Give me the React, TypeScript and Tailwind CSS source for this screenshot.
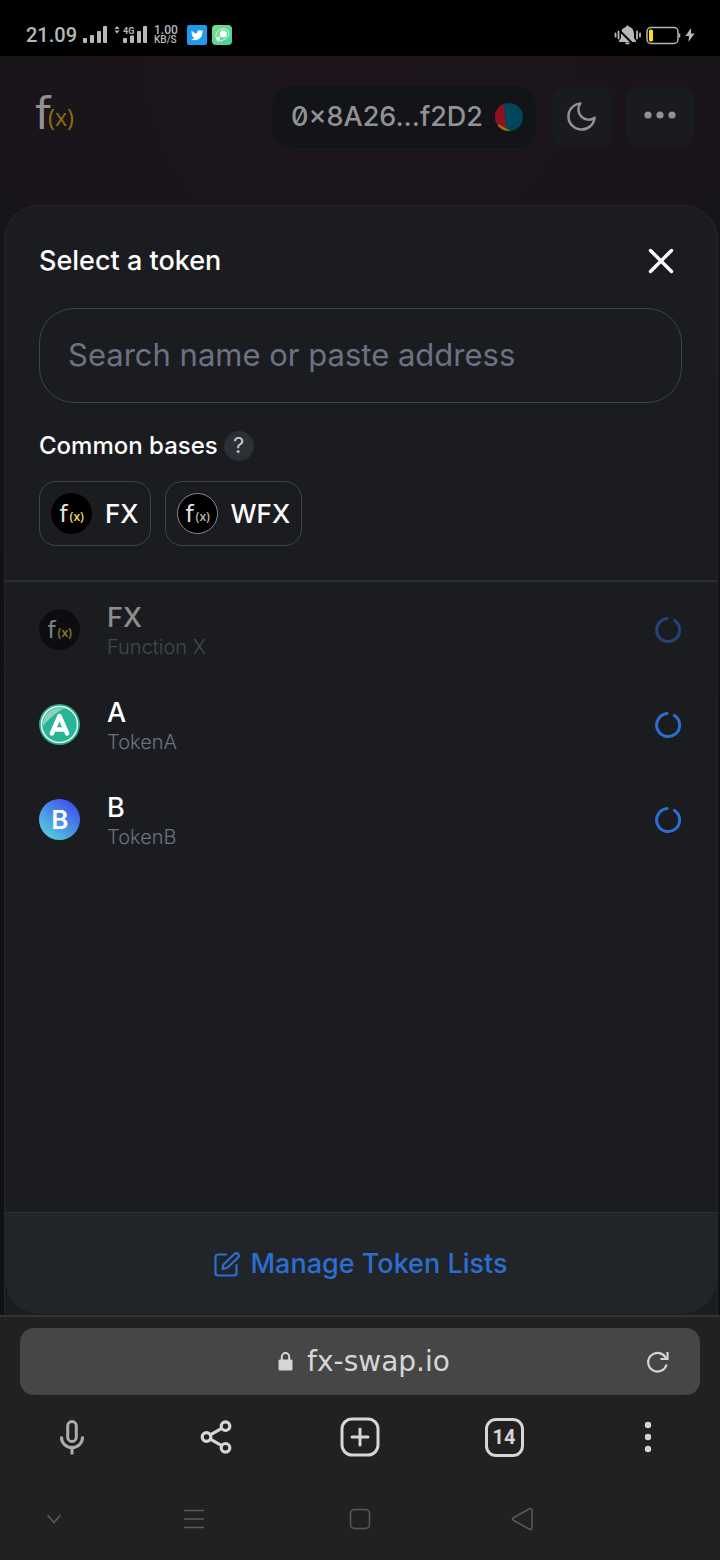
import { ReactNode } from "react";
import clsx from "clsx";

type Token = {
    symbol: string;
    name: string;
    icon: ReactNode;
    disabled?: boolean;
};

const FxLogo = ({ accent, ring }: { accent: string; ring?: boolean }) => (
    <svg viewBox="0 0 41 41" className="size-[41px] shrink-0" aria-hidden="true">
        <circle cx="20.5" cy="20.5" r="20" fill="#000" stroke={ring ? "#8a8a8a" : "#000"} strokeWidth="1" />
        <text x="8.5" y="29" fill="#e4e4e4" fontSize="23" fontFamily="DejaVu Sans, sans-serif">f</text>
        <text x="18.500" y="28" fill={accent} fontSize="12" fontWeight="600" fontFamily="Noto Sans, sans-serif">(x)</text>
    </svg>
);

const TokenAIcon = () => (
    <svg viewBox="0 0 41 41" className="size-[41px] shrink-0" aria-hidden="true">
        <circle cx="20.5" cy="20.5" r="20.5" fill="#2aa88c" />
        <circle cx="20.5" cy="20.5" r="18" fill="#27b596" stroke="#e9faf5" strokeWidth="1.5" />
        <path d="M4 22 A16.5 16.5 0 0 1 25 4.6 Q15 9 4 22Z" fill="#8fd0c0" />
        <path d="M12.8 29.5 L20.5 12 L28.2 29.5 M15.5 25.5 H25.5" fill="none" stroke="#fff" strokeWidth="4.4" strokeLinecap="round" strokeLinejoin="round" />
    </svg>
);

const TokenBIcon = () => (
    <svg viewBox="0 0 41 41" className="size-[41px] shrink-0" aria-hidden="true">
        <defs>
            <linearGradient id="token-b" x1="0.15" y1="0.9" x2="0.8" y2="0.1">
                <stop offset="0" stopColor="#55cbdc" />
                <stop offset="1" stopColor="#3e55ea" />
            </linearGradient>
        </defs>
        <circle cx="20.5" cy="20.5" r="20.5" fill="url(#token-b)" />
        <text x="20.8" y="30" textAnchor="middle" fill="#fff" fontSize="26" fontWeight="600" fontFamily="Inter, sans-serif">B</text>
    </svg>
);

const tokens: Token[] = [
    { symbol: "FX", name: "Function X", icon: <FxLogo accent="#e6cf50" />, disabled: true },
    { symbol: "A", name: "TokenA", icon: <TokenAIcon /> },
    { symbol: "B", name: "TokenB", icon: <TokenBIcon /> },
];

const Spinner = () => (
    <svg viewBox="0 0 28 28" className="size-7" aria-label="Loading" role="img">
        <path d="M20.4 4.4 A11.5 11.5 0 1 1 13 2.6" fill="none" stroke="#2b6fd0" strokeWidth="3" strokeLinecap="round" />
    </svg>
);

const StatusBar = () => (
    <div className="flex h-14 items-start justify-between bg-black pt-[22px] pr-[25px] pl-[26px] text-[#b8b8b8]" style={{ fontFamily: "Roboto, sans-serif" }}>
        <div className="flex h-[26px] items-center">
            <span className="text-xl leading-[26px] font-medium">21.09</span>
            <svg viewBox="0 0 66 20" className="ml-1.5 h-5 w-[66px]" fill="currentColor" aria-hidden="true">
                <rect x="0" y="13" width="4" height="5" rx="1" />
                <rect x="7" y="10" width="4" height="8" rx="1" />
                <rect x="14" y="6" width="4" height="12" rx="1" />
                <rect x="20" y="1" width="4" height="17" rx="1" />
                <path d="M31.500 4 L34 1 L36.500 4Z M31.500 5.500 L34 8.500 L36.500 5.500Z" />
                <text x="40" y="8.500" fontSize="9" fontWeight="700" fontFamily="Roboto, sans-serif">4G</text>
                <rect x="40" y="13" width="4" height="5" rx="1" />
                <rect x="47" y="10.500" width="4" height="7.500" rx="1" />
                <rect x="54" y="6" width="4" height="12" rx="1" />
                <rect x="60" y="1" width="4" height="17" rx="1" />
            </svg>
            <div className="ml-[5px] flex w-[26px] flex-col font-medium">
                <span className="text-xs leading-[10px]">1.00</span>
                <span className="text-[10px] leading-[10px]">KB/S</span>
            </div>
            <svg viewBox="0 0 20 20" className="ml-[7px] size-5" aria-hidden="true">
                <rect width="20" height="20" rx="2" fill="#1d9bf0" />
                <path transform="translate(4 4) scale(.52)" fill="#fff" d="M23.950 4.570a10 10 0 0 1-2.820.770 4.960 4.960 0 0 0 2.160-2.720c-.950.550-2 .960-3.130 1.180a4.920 4.920 0 0 0-8.380 4.480C7.690 8.100 4.070 6.130 1.640 3.160a4.820 4.820 0 0 0-.670 2.480c0 1.710.870 3.210 2.190 4.100a4.900 4.900 0 0 1-2.230-.620v.060a4.920 4.920 0 0 0 3.950 4.830 5 5 0 0 1-2.210.080 4.940 4.940 0 0 0 4.600 3.420A9.870 9.870 0 0 1 0 19.540a14 14 0 0 0 7.550 2.210c9.050 0 14-7.500 14-13.980 0-.210 0-.420-.020-.630a9.940 9.940 0 0 0 2.420-2.570z" />
            </svg>
            <svg viewBox="0 0 20 20" className="ml-[5px] size-5" aria-hidden="true">
                <defs>
                    <linearGradient id="app-green" x1="0" y1="0" x2="1" y2="1">
                        <stop offset="0" stopColor="#7fdc86" />
                        <stop offset="1" stopColor="#41d3a4" />
                    </linearGradient>
                </defs>
                <rect width="20" height="20" rx="4" fill="url(#app-green)" />
                <circle cx="11.200" cy="9" r="3.600" fill="#fff" />
                <circle cx="6" cy="13.500" r="2" fill="#fff" />
                <path d="M4 12 C3 7 8 3.500 12 3.800 C17 4.500 17.500 9 15.500 12 C13 15 8 16.500 5 16" fill="none" stroke="#e8fff0" strokeWidth=".9" />
            </svg>
        </div>
        <div className="flex h-[26px] items-center">
            <svg viewBox="0 0 28 22" className="h-[22px] w-7" fill="currentColor" aria-hidden="true">
                <path d="M13.500 1.500 a1.500 1.500 0 0 1 1.500 1.300 C19 4 20 7 20 11 L20 14 L22 17 V18 H5 V17 L7 14 V11 C7 7 8 4 12 3.300 A1.500 1.500 0 0 1 13.500 1.500Z M11 18.500 H16 A2.500 2 0 0 1 11 18.500Z" />
                <path d="M3 4 L20 21" stroke="#000" strokeWidth="2" />
                <path d="M1.500 9.500 V12.500 M4.500 7.500 V14.500 M23 7.500 V14.500 M26 9.500 V12.500" stroke="currentColor" strokeWidth="1.800" strokeLinecap="round" />
            </svg>
            <svg viewBox="0 0 35 19" className="ml-1 h-[19px] w-[35px]" aria-hidden="true">
                <rect x="1" y="1.500" width="31" height="16" rx="4" fill="none" stroke="currentColor" strokeWidth="1.500" />
                <path d="M33.500 7.500 V11.500" stroke="currentColor" strokeWidth="1.500" />
                <rect x="3" y="3.500" width="4" height="12" rx="1.500" fill="#ffdf1b" />
            </svg>
            <svg viewBox="0 0 10 14" className="ml-1 h-3.5 w-2.5" fill="currentColor" aria-hidden="true">
                <path d="M6 0 L0.500 8 H4 L3.500 14 L9.500 5.500 H6Z" />
            </svg>
        </div>
    </div>
);

const SiteHeader = () => (
    <header className="flex items-start justify-between pt-7 pr-[26px] pb-[55px] pl-[34px]">
        <svg viewBox="0 0 46 64" className="h-16 w-[46px]" role="img" aria-label="f(x)">
            <text x="1" y="45" fill="#929094" fontSize="44" fontFamily="DejaVu Sans, sans-serif">f</text>
            <text x="14" y="42" fill="#8d6b10" fontSize="23" fontFamily="Noto Sans, sans-serif">(x)</text>
        </svg>
        <div className="flex items-center">
            <button type="button" className="flex h-[66px] items-center gap-3 rounded-[24px] border border-[#1b1c20] bg-[#121418] pr-3.5 pl-5 text-[27px] font-medium text-[#929294]">
                <span style={{ fontFeatureSettings: '"zero", "calt"' }}>0×8A26...f2D2</span>
                <svg viewBox="0 0 28 28" className="size-7" aria-hidden="true">
                    <defs>
                        <clipPath id="avatar"><circle cx="14" cy="14" r="14" /></clipPath>
                    </defs>
                    <g clipPath="url(#avatar)">
                        <rect width="28" height="28" fill="#02465b" />
                        <path d="M0 0 L9 2 L11 28 H0Z" fill="#930f22" />
                        <path d="M3 21 L16 28 H3Z" fill="#a0700d" />
                    </g>
                </svg>
            </button>
            <button type="button" aria-label="Toggle theme" className="ml-[13px] flex h-[60px] w-[61px] items-center justify-center rounded-[14px] bg-[#191b1f] pb-0.5 text-[#929294]">
                <svg viewBox="0 0 24 24" className="size-[35px]" fill="none" stroke="currentColor" strokeWidth="1.700" strokeLinecap="round" strokeLinejoin="round">
                    <path d="M21 12.790A9 9 0 1 1 11.210 3 7 7 0 0 0 21 12.790z" />
                </svg>
            </button>
            <button type="button" aria-label="More" className="ml-3.5 flex h-[60px] w-[68px] items-center justify-center rounded-[14px] bg-[#191b1f] pb-1 text-[#929294]">
                <svg viewBox="0 0 32 8" className="h-2 w-8" fill="currentColor">
                    <circle cx="4" cy="4" r="3.600" />
                    <circle cx="16" cy="4" r="3.600" />
                    <circle cx="28" cy="4" r="3.600" />
                </svg>
            </button>
        </div>
    </header>
);

const TokenRow = ({ token }: { token: Token }) => (
    <li>
        <button
            type="button"
            disabled={token.disabled}
            className={clsx("flex h-[95px] w-full items-center pr-[35px] pl-[34px] text-left", token.disabled && "opacity-50")}
        >
            {token.icon}
            <span className="ml-[27px] flex flex-1 flex-col">
                <span className="text-[27px] leading-[35px] font-medium text-white">{token.symbol}</span>
                <span className="text-xl leading-[24px] font-light text-[#6c7284]">{token.name}</span>
            </span>
            <Spinner />
        </button>
    </li>
);

const TokenModal = () => (
    <section className="mr-0.5 ml-1 flex flex-1 flex-col rounded-t-[35px] border border-b-0 border-[#25262b] bg-[#1b1c20]">
        <div className="border-b-2 border-[#2c2e36] pt-[34px] pr-[35px] pb-[34px] pl-[34px]">
            <div className="flex h-[42px] items-center justify-between">
                <h2 className="text-[27px] font-medium text-white">Select a token</h2>
                <button type="button" aria-label="Close" className="flex size-[42px] items-center justify-center text-white">
                    <svg viewBox="0 0 26 26" className="size-[26px]" fill="none" stroke="currentColor" strokeWidth="3.400" strokeLinecap="round">
                        <path d="M2.500 2.500 L23.500 23.500 M23.500 2.500 L2.500 23.500" />
                    </svg>
                </button>
            </div>
            <input
                type="text"
                aria-label="Search name or paste address"
                placeholder="Search name or paste address"
                className="mt-[26px] block h-[95px] w-full rounded-[35px] border border-[#40444f] bg-transparent px-7 pb-0.5 text-[31px] text-white outline-none placeholder:text-[#6c7284]"
            />
            <div className="mt-[27px] flex h-[31px] items-center gap-1.5">
                <span className="text-2xl font-medium text-white">Common bases</span>
                <button type="button" aria-label="Help" className="flex size-[30px] items-center justify-center rounded-full bg-[#2c2f36] text-[22px] text-[#c3c5cb]">?</button>
            </div>
            <div className="mt-5 flex gap-3.5">
                <button type="button" className="flex h-[65px] items-center gap-[13px] rounded-[17px] border border-[#40444f] px-[11px] text-[26px] font-medium text-white">
                    <FxLogo accent="#e6cf50" />
                    FX
                </button>
                <button type="button" className="flex h-[65px] items-center gap-[13px] rounded-[17px] border border-[#40444f] px-[11px] text-[26px] font-medium text-white">
                    <FxLogo accent="#b5b09c" ring />
                    WFX
                </button>
            </div>
        </div>
        <ul className="flex-1">
            {tokens.map((token) => (
                <TokenRow key={token.symbol} token={token} />
            ))}
        </ul>
        <div className="mb-px flex h-[102px] items-center justify-center rounded-b-[35px] border-t border-[#2c3035] bg-[#212429] pt-0.5">
            <button type="button" className="flex items-center gap-2.5 text-[27px] font-medium text-[#2b6fd0]">
                <svg viewBox="0 1 26 26" className="size-[26px]" fill="none" stroke="currentColor" strokeWidth="2.200" strokeLinecap="round" strokeLinejoin="round" aria-hidden="true">
                    <path d="M12 3.500 H4 A2.500 2.500 0 0 0 1.500 6 V22 A2.500 2.500 0 0 0 4 24.500 H20 A2.500 2.500 0 0 0 22.500 22 V14" />
                    <path d="M20.500 3 A2.400 2.400 0 0 1 24.200 6.500 L13 17 L8.500 18 L9.500 13.500 Z" />
                </svg>
                Manage Token Lists
            </button>
        </div>
    </section>
);

const BrowserBar = () => (
    <footer className="border-t-2 border-[#333333] bg-[#212121] pt-[11px] pb-px text-[#d6d6d6]">
        <div className="mx-5 grid h-[67px] grid-cols-[1fr_auto_1fr] items-center rounded-[14px] bg-[#464646]">
            <span />
            <a href="#url" className="flex items-center gap-3.5 pl-2 text-[28px]" style={{ fontFamily: '"DejaVu Sans", sans-serif' }}>
                <svg viewBox="0 0 15 19" className="h-[19px] w-[15px]" fill="currentColor" aria-hidden="true">
                    <rect x="0.500" y="7.500" width="14" height="11" rx="1.500" />
                    <path d="M3.800 8 V4.700 A3.700 3.700 0 0 1 11.200 4.700 V8" fill="none" stroke="currentColor" strokeWidth="2" />
                </svg>
                fx-swap.io
            </a>
            <button type="button" aria-label="Reload" className="mr-[30px] justify-self-end">
                <svg viewBox="0 0 24 24" className="size-6" fill="none" stroke="currentColor" strokeWidth="2.200">
                    <path d="M20.500 14.500 A9.300 9.300 0 1 1 20 8.500" />
                    <path d="M21.500 2 V9 H14.500" />
                </svg>
            </button>
        </div>
        <div className="grid h-[84px] grid-cols-5 place-items-center">
            <button type="button" aria-label="Voice search" className="text-[#adadad]">
                <svg viewBox="0 0 26 36" className="h-9 w-[26px]" fill="none" stroke="currentColor" strokeWidth="3">
                    <rect x="8.700" y="2.500" width="8.600" height="20" rx="4.300" />
                    <path d="M2.500 17.500 V18.500 A10.500 10 0 0 0 23.500 18.500 V17.500 M13 28.500 V35.500" />
                </svg>
            </button>
            <button type="button" aria-label="Share">
                <svg viewBox="0 0 32 36" className="h-9 w-8" fill="none" stroke="currentColor" strokeWidth="3.200">
                    <circle cx="6.500" cy="18" r="4.300" />
                    <circle cx="25.500" cy="7.200" r="4.300" />
                    <circle cx="25.500" cy="28.800" r="4.300" />
                    <path d="M10.300 15.800 L21.700 9.400 M10.300 20.200 L21.700 26.600" />
                </svg>
            </button>
            <button type="button" aria-label="New tab">
                <svg viewBox="0 0 40 40" className="size-10" fill="none" stroke="currentColor" strokeWidth="3">
                    <rect x="2" y="2" width="36" height="36" rx="10" />
                    <path d="M20 12 V28 M12 20 H28" strokeLinecap="round" />
                </svg>
            </button>
            <button
                type="button"
                aria-label="Tabs"
                className="flex size-[39px] items-center justify-center rounded-[11px] border-3 border-[#d6d6d6] text-xl leading-none font-bold"
                style={{ fontFamily: "Roboto, sans-serif" }}
            >
                14
            </button>
            <button type="button" aria-label="Menu">
                <svg viewBox="0 0 8 32" className="h-8 w-2" fill="currentColor">
                    <circle cx="4" cy="4" r="3.200" />
                    <circle cx="4" cy="16" r="3.200" />
                    <circle cx="4" cy="28" r="3.200" />
                </svg>
            </button>
        </div>
        <nav className="grid h-20 grid-cols-[15fr_24fr_22fr_23fr_16fr] place-items-center text-[#5a5a5a]">
            <button type="button" aria-label="Hide navigation">
                <svg viewBox="0 0 16 10" className="h-2.5 w-4" fill="none" stroke="currentColor" strokeWidth="1.500">
                    <path d="M1.500 1 L8 8.500 L14.500 1" />
                </svg>
            </button>
            <button type="button" aria-label="Recent apps">
                <svg viewBox="0 0 22 22" className="size-[22px]" stroke="currentColor" strokeWidth="1.500">
                    <path d="M1 2.500 H21 M1 11 H21 M1 19.500 H21" />
                </svg>
            </button>
            <button type="button" aria-label="Home">
                <svg viewBox="0 0 22 22" className="size-[22px]" fill="none" stroke="currentColor" strokeWidth="1.500">
                    <rect x="1.500" y="1.500" width="19" height="19" rx="4" />
                </svg>
            </button>
            <button type="button" aria-label="Back">
                <svg viewBox="0 0 24 24" className="size-6" fill="none" stroke="currentColor" strokeWidth="1.500" strokeLinejoin="round">
                    <path d="M20 1.500 L3 11 Q1.800 12 3 13 L20 22.500 Q22 22.800 22 21 V3 Q22 1.200 20 1.500Z" />
                </svg>
            </button>
        </nav>
    </footer>
);

const App = () => {
    return (
        <div className="flex min-h-screen flex-col bg-[#0f0f12]" style={{ fontFamily: "Inter, sans-serif" }}>
            <StatusBar />
            <main className="flex flex-1 flex-col bg-[radial-gradient(circle_at_50%_0%,#1d151b_0%,#1a151a_320px,#131317_480px,#101114_800px)]">
                <SiteHeader />
                <TokenModal />
            </main>
            <BrowserBar />
        </div>
    );
};

export default App;
